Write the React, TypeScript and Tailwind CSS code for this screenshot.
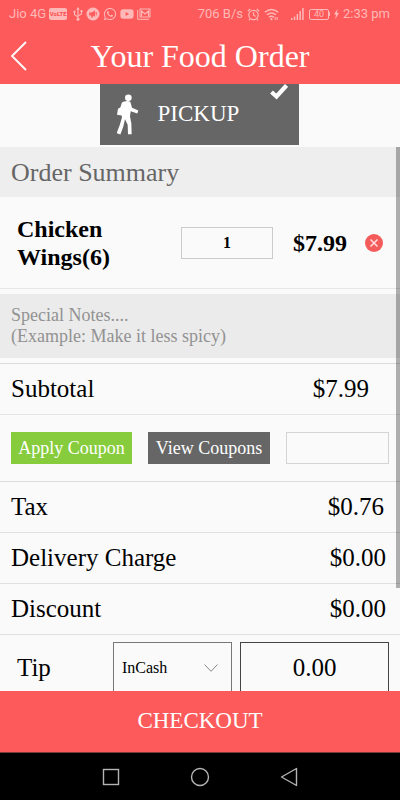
import React, { useState } from 'react'
import clsx from 'clsx'
import { FaWhatsapp, FaYoutube } from 'react-icons/fa'

interface Charge {
  label: string
  amount: string
  inset: string
}

const CHARGES: Charge[] = [
  { label: 'Tax', amount: '$0.76', inset: 'pr-4' },
  { label: 'Delivery Charge', amount: '$0.00', inset: 'pr-3.5' },
  { label: 'Discount', amount: '$0.00', inset: 'pr-3.5' },
]

function UsbIcon() {
  return (
    <svg viewBox="0 0 10 14" className="w-2.5 h-3.5" fill="none" stroke="currentColor">
      <path d="M5 2v10M5 10L1.5 7.8V5M5 9l3.5-2V4" strokeWidth="1.1" />
      <path d="M5 0L3.2 2.8h3.6zM.5 3.8h2v2h-2zM7.5 3h2v2h-2z" fill="currentColor" stroke="none" />
      <circle cx="5" cy="12.2" r="1.5" fill="currentColor" stroke="none" />
    </svg>
  )
}

function MegaphoneIcon() {
  return (
    <svg viewBox="0 0 14 14" className="size-3.5">
      <circle cx="7" cy="7" r="6.5" fill="currentColor" />
      <path d="M3.2 5.6h2.6L9 3.6v6.2L6.8 8.6v2H5.2v-2h-2z" fill="#fd5b5b" />
      <path d="M10.2 5v3.4" stroke="#fd5b5b" />
    </svg>
  )
}

function MailIcon() {
  return (
    <svg viewBox="0 0 14 12" className="w-3.5 h-3" fill="none" stroke="currentColor">
      <path d="M.7 2v9.3H12" />
      <rect x="3" y="1" width="10" height="8" />
      <path d="M4.5 8.5V3L8 6l3.5-3v5.5" strokeWidth="1.2" />
    </svg>
  )
}

function AlarmIcon() {
  return (
    <svg viewBox="0 0 13 13" className="size-[13px]" fill="none" stroke="currentColor" strokeWidth="1.2">
      <circle cx="6.5" cy="7" r="4.7" />
      <path d="M6.5 4.2V7l2 1.4M.8 3.3L3.3 1M12.2 3.3L9.7 1M3 11l-1 1.4M10 11l1 1.4" />
    </svg>
  )
}

function WifiIcon() {
  return (
    <svg viewBox="0 0 15 13" className="w-[15px] h-[13px]" fill="none" stroke="currentColor" strokeWidth="1.4">
      <path d="M.8 4.3Q7.5-1.5 14.2 4.3M3 6.8Q7.5 3 12 6.8M5 9.2q2.5-2 5 0" />
      <circle cx="7.5" cy="11.2" r="1.1" fill="currentColor" stroke="none" />
      <path d="M11.2 9v3M13.2 9v3" strokeWidth="1" />
    </svg>
  )
}

function SignalIcon() {
  return (
    <svg viewBox="0 0 13 12" className="w-[13px] h-3" fill="currentColor">
      <path d="M0 10h1.5v2H0zM2.8 8.5h1.5V12H2.8zM5.6 6h1.5v6H5.6zM8.4 3h1.5v9H8.4zM11.2 0h1.5v12h-1.5z" />
    </svg>
  )
}

function WalkerIcon() {
  return (
    <svg viewBox="20 18 66 122" className="w-[22px] h-[41px]" fill="currentColor">
      <circle cx="54" cy="29" r="10" />
      <path d="M42 40q10-4 18 1l5 18 19 8-3 9-20-7-2 16 4 20 1 33H53l-1-28-8-17-5 22-9 24-11-4 9-24 7-24-1-5-14-2 3-18 7-4 4-13q2-4 8-5z" />
    </svg>
  )
}

function StatusBar() {
  return (
    <div className="h-7 pl-[9px] pr-2.5 flex items-center justify-between font-[Roboto,sans-serif] text-[13px] text-[#ffb8b8]">
      <div className="flex items-center gap-[3px]">
        <span className="whitespace-nowrap">Jio 4G</span>
        <span className="mr-[3px] w-[18px] rounded-xs bg-[#ffb8b8] text-center text-[6px] leading-3 font-bold text-[#fd4b4b]">
          VoLTE
        </span>
        <UsbIcon />
        <MegaphoneIcon />
        <FaWhatsapp className="size-3.5" />
        <FaYoutube className="size-3.5" />
        <MailIcon />
      </div>
      <div className="flex items-center gap-1">
        <span>706 B/s</span>
        <AlarmIcon />
        <WifiIcon />
        <span className="ml-2 flex">
          <SignalIcon />
        </span>
        <span className="ml-px flex items-center">
          <span className="w-5 rounded-xs border border-current text-center text-[9px] leading-[9px]">40</span>
          <span className="w-px h-1 bg-current" />
        </span>
        <svg viewBox="0 0 5 10" className="w-[5px] h-2.5" fill="currentColor">
          <path d="M3.5 0L0 5.5h2L1.3 10 5 4H3z" />
        </svg>
        <span>2:33 pm</span>
      </div>
    </div>
  )
}

function NavBar() {
  return (
    <nav className="h-12 shrink-0 flex items-center justify-center gap-[69px] border-t border-[#7a3a3a] bg-black text-[#b4b4b4]">
      <button aria-label="Recent apps">
        <svg viewBox="0 0 20 20" className="size-5" fill="none" stroke="currentColor" strokeWidth="1.4">
          <rect x="2.5" y="2.5" width="15" height="15" />
        </svg>
      </button>
      <button aria-label="Home">
        <svg viewBox="0 0 20 20" className="size-5" fill="none" stroke="currentColor" strokeWidth="1.4">
          <circle cx="10" cy="10" r="8.5" />
        </svg>
      </button>
      <button aria-label="Back">
        <svg viewBox="0 0 20 20" className="size-5" fill="none" stroke="currentColor" strokeWidth="1.4" strokeLinejoin="round">
          <path d="M17.5 1.5v17L2.5 10z" />
        </svg>
      </button>
    </nav>
  )
}

export default function App() {
  const [quantity, setQuantity] = useState('1')
  const [notes, setNotes] = useState('')
  const [coupon, setCoupon] = useState('')
  const [tip, setTip] = useState('0.00')

  return (
    <div className="h-screen flex flex-col bg-[#fafafa] font-['Liberation_Serif',serif] text-black">
      <header className="shrink-0 bg-[#fd5b5b] text-white">
        <StatusBar />
        <div className="h-14 grid grid-cols-[40px_1fr_40px] items-center">
          <button aria-label="Go back" className="pl-2.5">
            <svg viewBox="0 0 18 30" className="w-[18px] h-[30px]" fill="none" stroke="currentColor" strokeWidth="1.8">
              <path d="M16 1L2 15l14 14" />
            </svg>
          </button>
          <h1 className="text-center text-[32px] leading-9">Your Food Order</h1>
        </div>
      </header>

      <div className="shrink-0 flex justify-center pr-0.5 pb-0.5">
        <button className="relative w-[199px] h-[61px] pl-[17px] flex items-center gap-[19px] bg-[#666] text-white">
          <WalkerIcon />
          <span className="text-[23px]">PICKUP</span>
          <svg
            viewBox="0 0 18 16"
            className="absolute top-0 right-[11px] w-[18px] h-4"
            fill="none"
            stroke="currentColor"
            strokeWidth="4.2"
          >
            <path d="M1.5 8L6.5 12.5 16.5 1.5" />
          </svg>
        </button>
      </div>

      <div className="relative flex-1 min-h-0">
        <main className="h-full overflow-y-auto [scrollbar-width:none]">
          <h2 className="h-[50px] pl-[11px] flex items-center bg-[#eee] text-[26px] text-[#666]">Order Summary</h2>

          <section className="h-[92px] px-[17px] flex items-center border-b border-[#e6e6e6] font-bold">
            <div className="flex-1 text-2xl leading-7">
              Chicken
              <br />
              Wings(6)
            </div>
            <input
              aria-label="Quantity"
              value={quantity}
              onChange={e => setQuantity(e.target.value)}
              className="w-[92px] h-8 border border-[#ccc] text-center text-base"
            />
            <span className="ml-5 w-[54px] text-2xl">$7.99</span>
            <button aria-label="Remove Chicken Wings(6)" className="ml-[18px] shrink-0">
              <svg viewBox="0 0 18 18" className="size-[18px]">
                <circle cx="9" cy="9" r="9" fill="#f45b5b" />
                <path d="M5.5 5.5l7 7M12.5 5.5l-7 7" stroke="#ffdede" strokeWidth="1.5" />
              </svg>
            </button>
          </section>

          <div className="py-[5px] border-b border-[#dcdcdc]">
            <textarea
              aria-label="Special notes"
              value={notes}
              onChange={e => setNotes(e.target.value)}
              placeholder={'Special Notes....\n(Example: Make it less spicy)'}
              className="block w-full h-16 pl-[11px] pt-[11px] resize-none bg-[#ebebeb] text-lg leading-[21px] placeholder:text-[#929292]"
            />
          </div>

          <div className="h-[51px] pl-[11px] pr-[31px] flex items-center justify-between border-b border-[#e4e4e4] text-[25px]">
            <span>Subtotal</span>
            <span>$7.99</span>
          </div>

          <div className="h-[67px] px-[11px] flex items-center gap-4 border-b border-[#dcdcdc] text-lg">
            <button className="w-[121px] h-8 shrink-0 bg-[#86cc3d] text-white">Apply Coupon</button>
            <button className="w-[122px] h-8 shrink-0 bg-[#666] text-white">View Coupons</button>
            <input
              aria-label="Coupon code"
              value={coupon}
              onChange={e => setCoupon(e.target.value)}
              className="min-w-0 flex-1 h-8 px-2 border border-[#d4d4d4]"
            />
          </div>

          {CHARGES.map(({ label, amount, inset }) => (
            <div
              key={label}
              className={clsx(
                'h-[51px] pl-[11px] flex items-center justify-between border-b border-[#e0e0e0] text-[25px]',
                inset
              )}
            >
              <span>{label}</span>
              <span>{amount}</span>
            </div>
          ))}

          <div className="pt-[7px] pb-2 pl-[17px] pr-[11px] flex items-center text-[25px]">
            <label htmlFor="tip" className="w-24 shrink-0">Tip</label>
            <div className="relative w-[119px] shrink-0">
              <select
                aria-label="Tip method"
                className="w-full h-[52px] pl-2 appearance-none border border-[#777] text-base"
              >
                <option>InCash</option>
                <option>Card</option>
              </select>
              <svg
                viewBox="0 0 14 8"
                className="absolute right-3.5 top-[22px] w-3.5 h-2 pointer-events-none"
                fill="none"
                stroke="#888"
              >
                <path d="M.5.5L7 7.3 13.5.5" />
              </svg>
            </div>
            <input
              id="tip"
              value={tip}
              onChange={e => setTip(e.target.value)}
              className="ml-2 min-w-0 flex-1 h-[52px] border border-[#444] text-center"
            />
          </div>
        </main>
        <div className="absolute right-0 top-0 w-1 h-[81%] bg-black/30 pointer-events-none" />
      </div>

      <button className="h-[61px] shrink-0 bg-[#fd5b5b] text-[23px] text-white">CHECKOUT</button>
      <NavBar />
    </div>
  )
}
